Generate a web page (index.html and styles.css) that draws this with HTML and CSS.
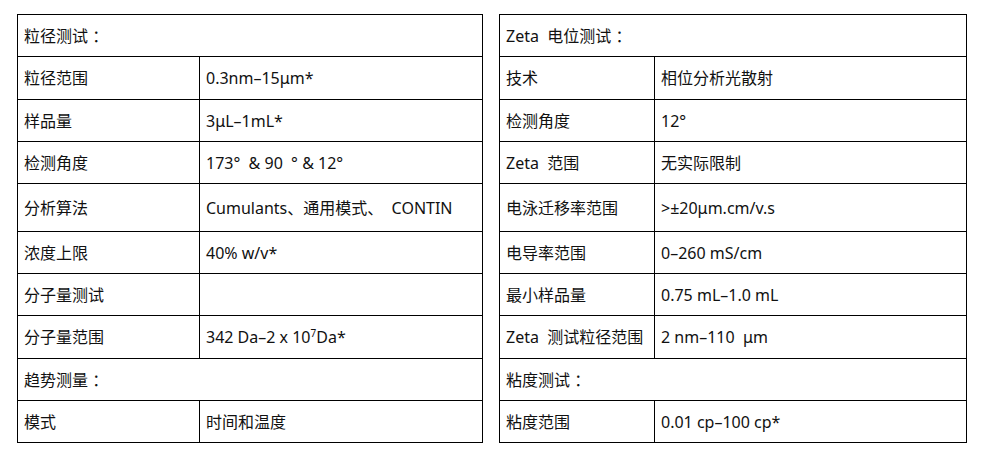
FILE: index.html
```html
<!DOCTYPE html>
<html lang="zh-CN">
<head>
<meta charset="utf-8">
<title>参数表</title>
<link rel="stylesheet" href="styles.css">
</head>
<body>
<div class="page">
  <table class="spec spec-left">
    <colgroup><col class="c1"><col class="c2"></colgroup>
    <tr class="r42"><td colspan="2">粒径测试 ：</td></tr>
    <tr class="r43"><td>粒径范围</td><td>0.3nm–15μm*</td></tr>
    <tr class="r42"><td>样品量</td><td>3μL–1mL*</td></tr>
    <tr class="r42"><td>检测角度</td><td>173°&nbsp; &amp; 90 &nbsp;°&nbsp;&amp; 12°</td></tr>
    <tr class="r48"><td>分析算法</td><td>Cumulants、通用模式、 &nbsp;CONTIN</td></tr>
    <tr class="r42"><td>浓度上限</td><td>40% w/v*</td></tr>
    <tr class="r42"><td>分子量测试</td><td></td></tr>
    <tr class="r43"><td>分子量范围</td><td>342 Da–2 x 10<sup>7</sup>Da*</td></tr>
    <tr class="r42"><td colspan="2">趋势测量 ：</td></tr>
    <tr class="r42"><td>模式</td><td>时间和温度</td></tr>
  </table>
  <table class="spec spec-right">
    <colgroup><col class="c1"><col class="c2"></colgroup>
    <tr class="r42"><td colspan="2">Zeta&nbsp; 电位测试 ：</td></tr>
    <tr class="r43"><td>技术</td><td>相位分析光散射</td></tr>
    <tr class="r42"><td>检测角度</td><td>12°</td></tr>
    <tr class="r42"><td>Zeta&nbsp; 范围</td><td>无实际限制</td></tr>
    <tr class="r48"><td>电泳迁移率范围</td><td>&gt;±20μm.cm/v.s</td></tr>
    <tr class="r42"><td>电导率范围</td><td>0–260 mS/cm</td></tr>
    <tr class="r42"><td>最小样品量</td><td>0.75 mL–1.0 mL</td></tr>
    <tr class="r43"><td>Zeta&nbsp; 测试粒径范围</td><td>2 nm–110 &nbsp;μm</td></tr>
    <tr class="r42"><td colspan="2">粘度测试 ：</td></tr>
    <tr class="r42"><td>粘度范围</td><td>0.01 cp–100 cp*</td></tr>
  </table>
</div>
</body>
</html>
```
FILE: styles.css
```css
html, body {
  margin: 0;
  padding: 0;
  background: #ffffff;
}

.page {
  display: flex;
  align-items: flex-start;
  gap: 16px;
  padding: 14px 0 0 17px;
  font-family: "Noto Sans", "Noto Sans CJK SC", sans-serif;
  font-size: 16px;
  color: #111111;
}

.spec {
  border-collapse: separate;
  border-spacing: 0;
  table-layout: fixed;
  border-left: 1px solid #000;
  border-top: 1px solid #000;
}

.spec td {
  box-sizing: border-box;
  border-right: 1px solid #000;
  border-bottom: 1px solid #000;
  padding: 0 0 0 6px;
  vertical-align: middle;
  white-space: nowrap;
  line-height: 20px;
}

.spec-left { width: 466px; }
.spec-left .c1 { width: 182px; }
.spec-left .c2 { width: 283px; }

.spec-right { width: 468px; }
.spec-right .c1 { width: 155px; }
.spec-right .c2 { width: 312px; }

.r42 td { height: 42px; }
.r43 td { height: 43px; }
.r48 td { height: 48px; }

sup {
  font-size: 10px;
  line-height: 0;
  vertical-align: 6px;
}
```
